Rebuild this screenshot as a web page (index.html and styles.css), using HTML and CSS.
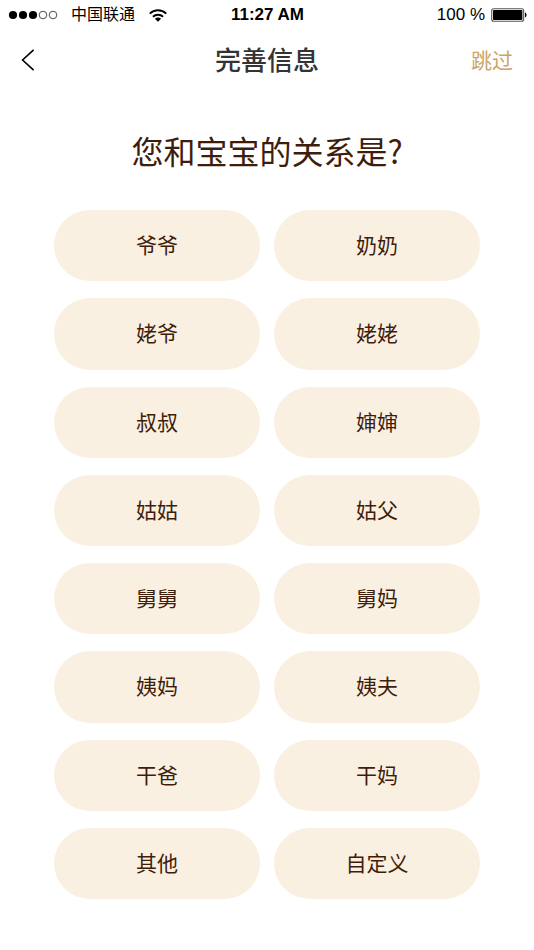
FILE: index.html
```html
<!DOCTYPE html>
<html lang="zh-CN">
<head>
<meta charset="utf-8">
<meta name="viewport" content="width=device-width, initial-scale=1">
<title>完善信息</title>
<link rel="stylesheet" href="styles.css">
</head>
<body>
<div class="page">
  <div class="status">
    <div class="status-left">
      <svg class="signal" width="50" height="10" viewBox="0 0 50 10" aria-hidden="true">
        <g fill="#000"><circle cx="5" cy="5" r="4.1"/><circle cx="15" cy="5" r="4.1"/><circle cx="25" cy="5" r="4.1"/></g>
        <g fill="none" stroke="#222" stroke-width=".8"><circle cx="35" cy="5" r="3.8"/><circle cx="45" cy="5" r="3.8"/></g>
      </svg>
      <span>中国联通</span>
      <svg class="wifi" width="18" height="13" viewBox="0 0 18 13" aria-hidden="true">
        <g fill="none" stroke="#000" stroke-width="1.9"><path d="M.8 4.6C5.4.1 12.6.1 17.2 4.6"/><path d="M3.9 7.8c2.9-2.8 7.3-2.8 10.2 0"/></g>
        <path d="M5.9 9.7c1.8-1.6 4.4-1.6 6.2 0L9 12.8z"/>
      </svg>
    </div>
    <span class="time">11:27 AM</span>
    <div class="status-right">
      <span>100 %</span>
      <svg width="36" height="14" viewBox="0 0 36 14" aria-hidden="true">
        <rect x=".7" y=".7" width="32" height="12.6" rx="2" fill="#fff" stroke="#555" stroke-width="1.1"/>
        <rect x="2" y="2" width="29.4" height="10" rx=".8"/>
        <path d="M34 4.6c2 .6 2 4.2 0 4.8z"/>
      </svg>
    </div>
  </div>
  <header class="nav">
    <button class="back" type="button" aria-label="返回">
      <svg width="14" height="22" viewBox="0 0 14 22" aria-hidden="true"><path d="M12.6.9 1.6 11l11 10.1" fill="none" stroke="#000" stroke-width="1.6"/></svg>
    </button>
    <h1 class="nav-title">完善信息</h1>
    <a class="skip" href="#">跳过</a>
  </header>
  <main class="content">
    <h2 class="question">您和宝宝的关系是?</h2>
    <div class="options">
      <button type="button" class="option">爷爷</button>
      <button type="button" class="option">奶奶</button>
      <button type="button" class="option">姥爷</button>
      <button type="button" class="option">姥姥</button>
      <button type="button" class="option">叔叔</button>
      <button type="button" class="option">婶婶</button>
      <button type="button" class="option">姑姑</button>
      <button type="button" class="option">姑父</button>
      <button type="button" class="option">舅舅</button>
      <button type="button" class="option">舅妈</button>
      <button type="button" class="option">姨妈</button>
      <button type="button" class="option">姨夫</button>
      <button type="button" class="option">干爸</button>
      <button type="button" class="option">干妈</button>
      <button type="button" class="option">其他</button>
      <button type="button" class="option">自定义</button>
    </div>
  </main>
</div>
</body>
</html>
```
FILE: styles.css
```css
* {
  box-sizing: border-box;
}

body {
  margin: 0;
  background: #fff;
  color: #3f1d0c;
  font-family: "Noto Sans CJK SC", sans-serif;
}

button {
  border: 0;
  padding: 0;
  color: inherit;
  font-family: inherit;
  cursor: pointer;
}

.page {
  display: flex;
  flex-direction: column;
  min-height: 100vh;
}

.status,
.nav {
  display: grid;
  grid-template-columns: 1fr auto 1fr;
  align-items: center;
}

.status {
  height: 30px;
  padding: 0 7px 0 8px;
  color: #000;
  font-family: "Liberation Sans", "Noto Sans CJK SC", sans-serif;
  font-size: 17px;
  line-height: 30px;
}

.status-left,
.status-right {
  display: flex;
  align-items: center;
}

.status-left {
  gap: 13px;
  font-size: 16px;
}

.status-right {
  justify-content: flex-end;
  gap: 6px;
}

.wifi {
  margin-left: 1px;
}

.time {
  font-weight: 700;
}

.nav {
  height: 60px;
  padding: 0 21px;
}

.back {
  display: flex;
  justify-self: start;
  background: none;
}

.nav-title {
  margin: 0;
  padding-bottom: 2px;
  color: #333;
  font-size: 26px;
  font-weight: 500;
  line-height: 40px;
}

.skip {
  justify-self: end;
  padding-bottom: 2px;
  color: #cda464;
  font-size: 21px;
  line-height: 32px;
  text-decoration: none;
}

.content {
  display: flex;
  flex: 1;
  flex-direction: column;
  padding: 36px 54px 51px;
}

.question {
  margin: 0 0 36px;
  font-size: 32px;
  font-weight: 400;
  line-height: 48px;
  text-align: center;
}

.options {
  display: grid;
  flex: 1;
  grid-template-columns: 1fr 1fr;
  grid-auto-rows: 1fr;
  gap: 17px 14px;
}

.option {
  min-height: 64px;
  padding-bottom: 3px;
  border-radius: 36px;
  background: #faf0e1;
  font-size: 21px;
  line-height: 32px;
}
```
